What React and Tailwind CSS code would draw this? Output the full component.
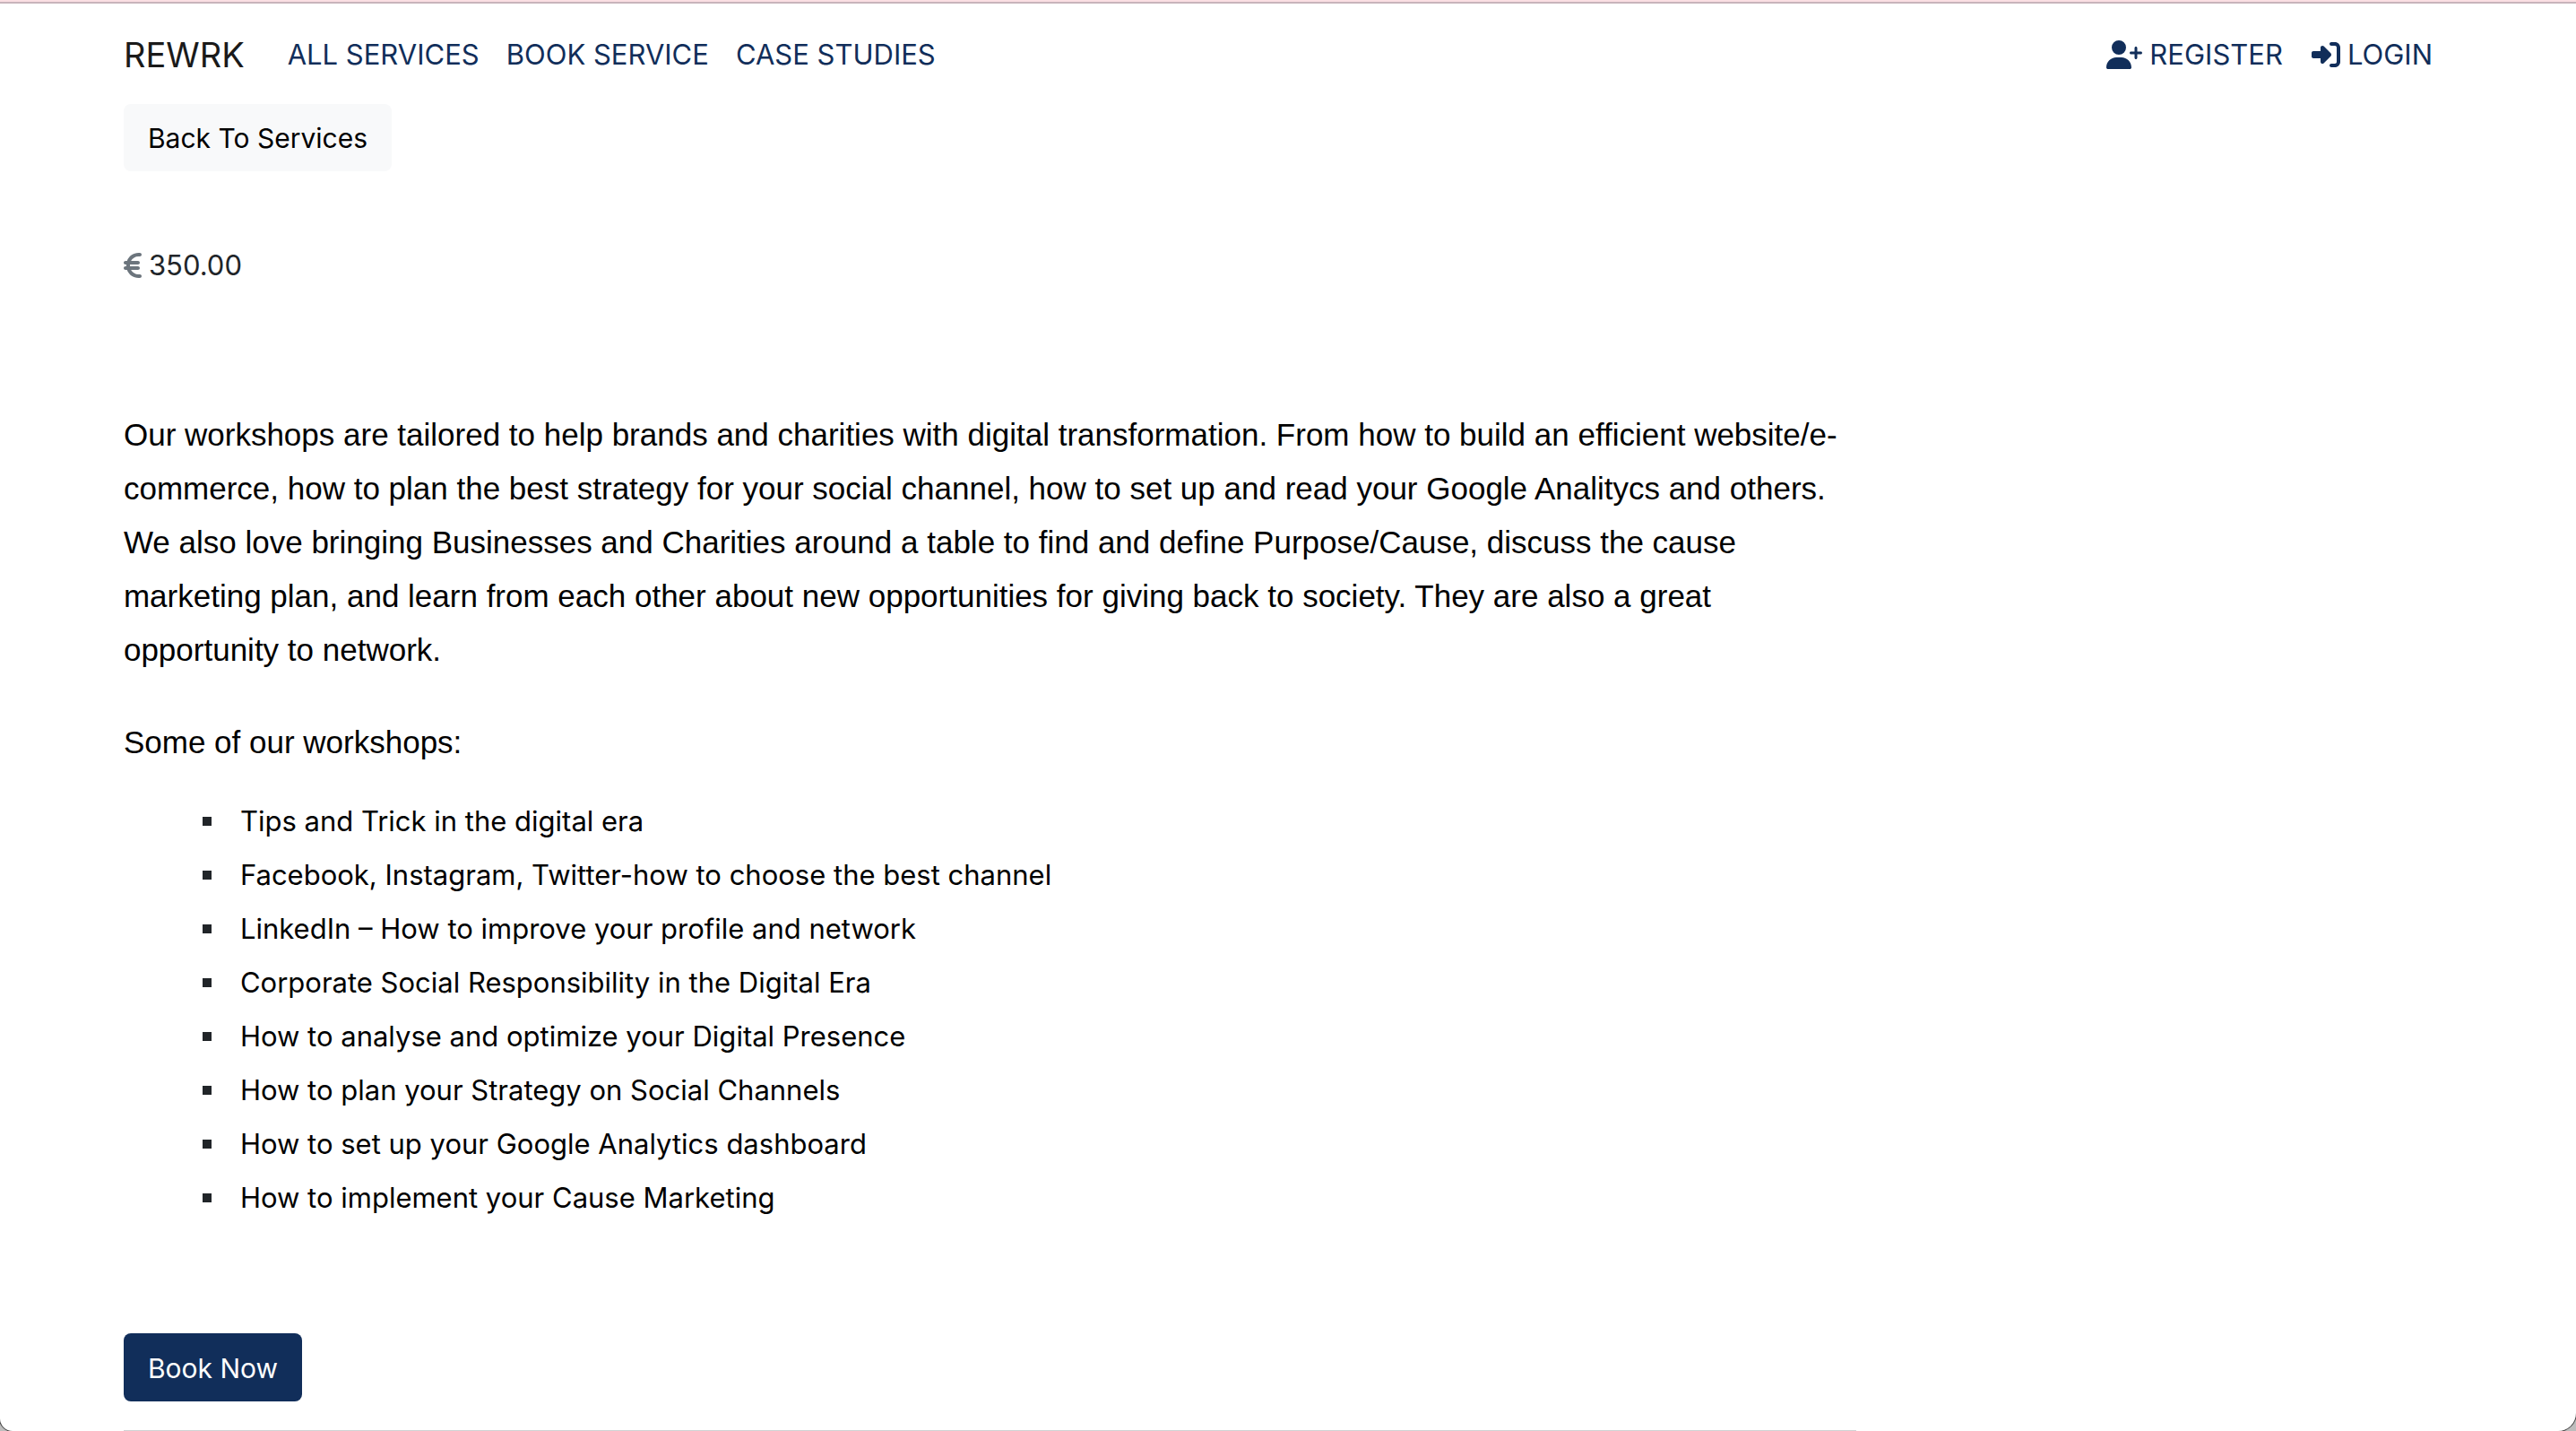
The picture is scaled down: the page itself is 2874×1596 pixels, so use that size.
import { FaUserPlus, FaRightToBracket, FaEuroSign } from "react-icons/fa6";

const navLinks = ["All Services", "Book Service", "Case Studies"];

const workshops = [
  "Tips and Trick in the digital era",
  "Facebook, Instagram, Twitter-how to choose the best channel",
  "LinkedIn – How to improve your profile and network",
  "Corporate Social Responsibility in the Digital Era",
  "How to analyse and optimize your Digital Presence",
  "How to plan your Strategy on Social Channels",
  "How to set up your Google Analytics dashboard",
  "How to implement your Cause Marketing",
];

function Navbar() {
  return (
    <nav className="flex h-28 items-center justify-between pt-0.5 pr-[22px] text-[31px] text-[#112e5a] uppercase">
      <div className="flex items-center">
        <a href="#" className="mr-12 text-[38px] text-[#1a1a1a]">Rewrk</a>
        <ul className="flex gap-[30px]">
          {navLinks.map((label) => (
            <li key={label}>
              <a href="#">{label}</a>
            </li>
          ))}
        </ul>
      </div>
      <ul className="flex gap-8">
        <li>
          <a href="#" className="flex items-center gap-2">
            <FaUserPlus className="h-8 w-10" aria-hidden="true" />
            Register
          </a>
        </li>
        <li>
          <a href="#" className="flex items-center gap-2">
            <FaRightToBracket className="size-8" aria-hidden="true" />
            Login
          </a>
        </li>
      </ul>
    </nav>
  );
}

export default function App() {
  return (
    <div className="min-h-screen overflow-hidden bg-[#bdbdbd] font-['Inter',sans-serif]">
      <div className="min-h-screen overflow-hidden rounded-br-[20px] rounded-bl-[14px] bg-white shadow-[0_0_0_1px_#444444]">
        <div className="h-0.5 bg-[#fbdfe3]" />
        <div className="h-0.5 bg-[#c8b4bb]" />
        <div className="mx-auto px-[4.8%]">
          <Navbar />
          <main className="w-[74.4%] text-[31px] text-black">
            <button type="button" className="block h-[75px] rounded-lg bg-[#f8f9fa] px-[27px] pt-0.5 text-[30px]">
              Back To Services
            </button>
            <p className="mt-[81px] flex h-12 items-center gap-2 text-[#212529]">
              <FaEuroSign className="h-8 w-5 text-[#6c757d]" aria-hidden="true" />
              350.00
            </p>
            <div className="mt-[135px] font-['Liberation_Sans',sans-serif] text-[35px] leading-[60px]">
              <p>
                Our workshops are tailored to help brands and charities with digital transformation. From how to build
                an efficient website/e-commerce, how to plan the best strategy for your social channel, how to set up
                and read your Google Analitycs and others. We also love bringing Businesses and Charities around a
                table to find and define Purpose/Cause, discuss the cause marketing plan, and learn from each other
                about new opportunities for giving back to society. They are also a great opportunity to network.
              </p>
              <p className="mt-[43px]">Some of our workshops:</p>
            </div>
            <ul className="mt-7 ml-[88px] leading-[60px]">
              {workshops.map((name) => (
                <li key={name} className="flex items-center">
                  <span className="mr-8 size-2.5 bg-[#212529]" />
                  {name}
                </li>
              ))}
            </ul>
            <button
              type="button"
              className="mt-[121px] block h-[76px] rounded-lg bg-[#112e5a] px-[27px] pt-0.5 text-[30px] text-white"
            >
              Book Now
            </button>
            <hr className="mt-8 border-t border-[#d0d2d3]" />
          </main>
        </div>
      </div>
    </div>
  );
}
